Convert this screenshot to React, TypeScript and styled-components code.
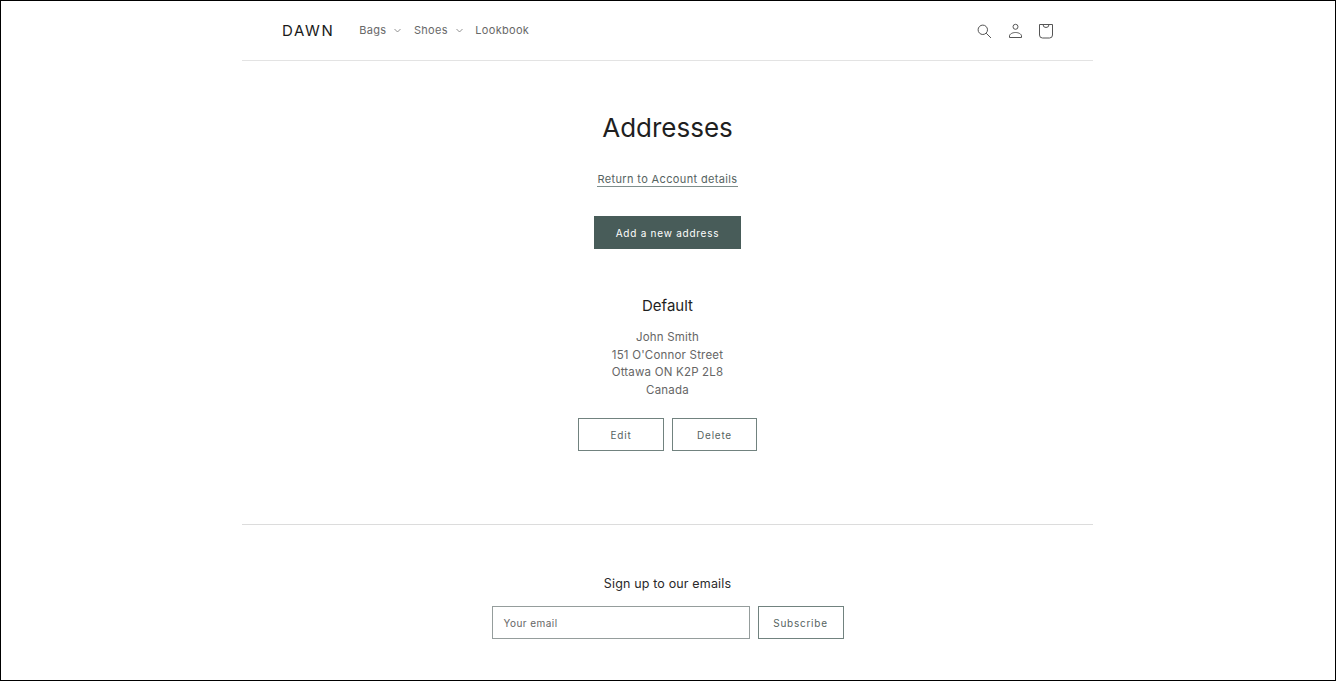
import React from "react";
import styled, { createGlobalStyle } from "styled-components";

const Global = createGlobalStyle`
  html, body { margin: 0; padding: 0; background: #fff; }
  body { font-family: Inter, "Liberation Sans", sans-serif; -webkit-font-smoothing: antialiased; }
  * { box-sizing: border-box; }
`;

const Frame = styled.div`
  width: 1336px;
  height: 681px;
  border: 1px solid #000;
  padding-right: 1px;
  display: flex;
  flex-direction: column;
  align-items: center;
  overflow: hidden;
`;

const Header = styled.header`
  width: 851px;
  height: 60px;
  border-bottom: 1px solid #e3e3e3;
  display: flex;
  align-items: center;
  padding: 0 39px 0 40px;
`;

const Logo = styled.a`
  font-size: 15px;
  font-weight: 400;
  letter-spacing: 1.6px;
  color: #1a1a1a;
  margin-right: 25px;
`;

const Nav = styled.nav`
  display: flex;
  align-items: center;
  gap: 12.5px;
  flex: 1;
`;

const NavItem = styled.a`
  display: flex;
  align-items: center;
  gap: 8px;
  font-size: 11px;
  line-height: 13px;
  letter-spacing: 0.3px;
  color: #686868;
`;

const Icons = styled.div`
  display: flex;
  align-items: center;
  gap: 15px;
  color: #555;
`;

const Main = styled.main`
  display: flex;
  flex-direction: column;
  align-items: center;
  width: 851px;
  height: 464px;
  border-bottom: 1px solid #dcdcdc;
`;

const Title = styled.h1`
  margin: 48px 0 0;
  font-size: 26px;
  line-height: 38px;
  font-weight: 400;
  color: #1f1f1f;
`;

const BackLink = styled.a`
  margin-top: 26px;
  font-size: 11px;
  line-height: 13px;
  letter-spacing: 0.36px;
  color: #566361;
  border-bottom: 1px solid #7f8e8c;
`;

const Primary = styled.button`
  margin-top: 29px;
  width: 147px;
  height: 33px;
  border: none;
  background: #485c59;
  color: #fff;
  font: 400 10px Inter, sans-serif;
  letter-spacing: 0.75px;
`;

const Heading = styled.h2`
  margin: 47px 0 0;
  font-size: 15px;
  line-height: 20px;
  font-weight: 400;
  color: #1f1f1f;
`;

const Address = styled.div`
  margin-top: 13px;
  text-align: center;
  font-size: 11.5px;
  line-height: 17.5px;
  letter-spacing: 0.2px;
  color: #666;
`;

const Actions = styled.div`
  margin-top: 19px;
  display: flex;
  gap: 8px;
`;

const Outline = styled.button<{ $w: number }>`
  width: ${(p) => p.$w}px;
  height: 33px;
  background: #fff;
  border: 1px solid #71827f;
  color: #566361;
  font: 400 10px Inter, sans-serif;
  letter-spacing: 0.75px;
`;

const Footer = styled.footer`
  display: flex;
  flex-direction: column;
  align-items: center;
`;

const SignUp = styled.h3`
  margin: 50px 0 0;
  font-size: 12.5px;
  line-height: 18px;
  font-weight: 400;
  letter-spacing: 0.15px;
  color: #2a2a2a;
`;

const Form = styled.form`
  margin-top: 13px;
  display: flex;
  gap: 8px;
`;

const EmailBox = styled.div`
  width: 258px;
  height: 33px;
  border: 1px solid #959d9c;
  display: flex;
  align-items: center;
  padding: 1px 0 0 11px;
  font-size: 10px;
  letter-spacing: 0.45px;
  color: #666;
`;

export default function App() {
  return (
    <>
      <Global />
      <Frame>
        <Header>
          <Logo>DAWN</Logo>
          <Nav>
            <NavItem>
              Bags
              <svg width="7" height="5" viewBox="0 0 7 5" fill="none" stroke="#777" strokeWidth="0.8"><path d="M0.5 1l3 3 3-3" /></svg>
            </NavItem>
            <NavItem>
              Shoes
              <svg width="7" height="5" viewBox="0 0 7 5" fill="none" stroke="#777" strokeWidth="0.8"><path d="M0.5 1l3 3 3-3" /></svg>
            </NavItem>
            <NavItem>Lookbook</NavItem>
          </Nav>
          <Icons>
            <svg width="16" height="16" viewBox="0 0 16 16" fill="none" stroke="currentColor" strokeWidth="1"><circle cx="6.800" cy="6.800" r="4.700" /><path d="M10.200 10.200l4.800 4.800" /></svg>
            <svg width="16" height="16" viewBox="0 0 16 16" fill="none" stroke="currentColor" strokeWidth="1"><circle cx="8.500" cy="3.800" r="2.500" /><path d="M2.500 14.500V13c0-2 3-3.500 6-3.500s6 1.500 6 3.500v1.500z" /></svg>
            <svg width="16" height="16" viewBox="0 0 16 16" fill="none" stroke="currentColor" strokeWidth="1"><path d="M1.500 1.500h13V12q0 3-3 3h-7q-3 0-3-3z" /><path d="M5 1.500a3 3 0 0 0 6 0" /></svg>
          </Icons>
        </Header>
        <Main>
          <Title>Addresses</Title>
          <BackLink>Return to Account details</BackLink>
          <Primary>Add a new address</Primary>
          <Heading>Default</Heading>
          <Address>
            John Smith<br />
            151 O'Connor Street<br />
            Ottawa ON K2P 2L8<br />
            Canada
          </Address>
          <Actions>
            <Outline $w={86}>Edit</Outline>
            <Outline $w={85}>Delete</Outline>
          </Actions>
        </Main>
        <Footer>
          <SignUp>Sign up to our emails</SignUp>
          <Form>
            <EmailBox>Your email</EmailBox>
            <Outline $w={86} type="button">Subscribe</Outline>
          </Form>
        </Footer>
      </Frame>
    </>
  );
}
